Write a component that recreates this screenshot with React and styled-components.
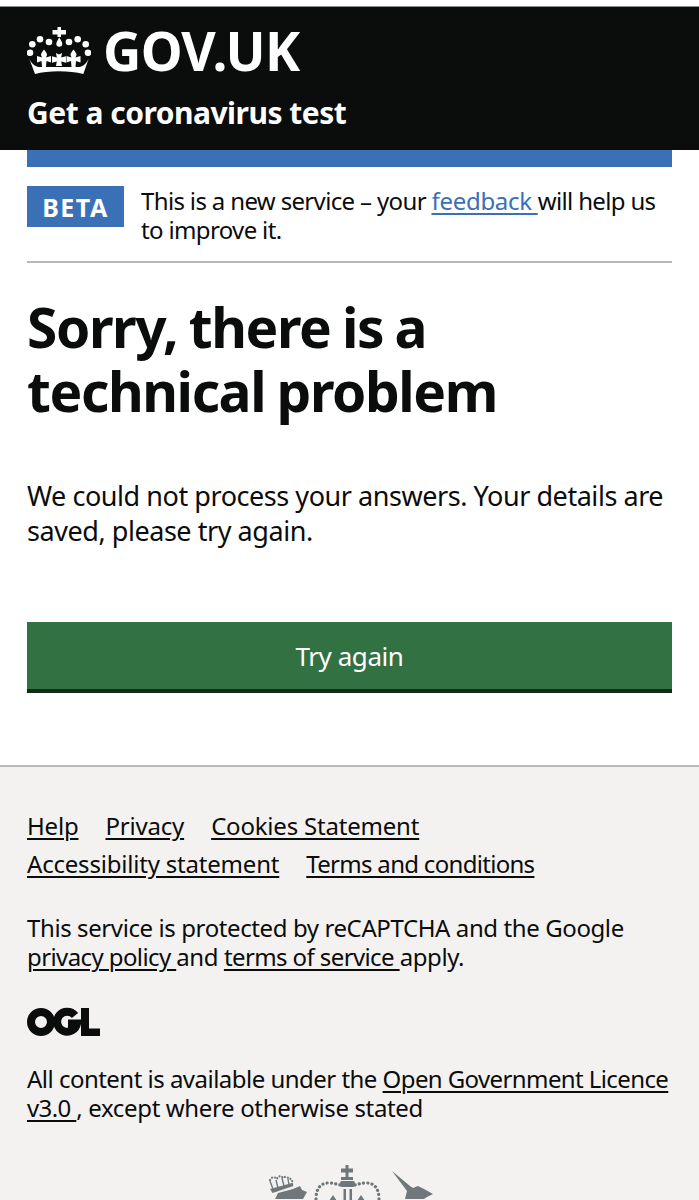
import React from "react"
import styled, { createGlobalStyle } from "styled-components"

const GlobalStyle = createGlobalStyle`
  html, body {
    margin: 0;
    padding: 0;
    background: #fff;
  }
  body {
    font-family: "Noto Sans", Arial, sans-serif;
    color: #0b0c0c;
  }
`

const Page = styled.div`
  height: 100vh;
  overflow: hidden;
  padding-top: 6px;
  box-sizing: border-box;
`

const Header = styled.header`
  background: #0b0c0c;
  border-top: 1px solid #8a8a8a;
  height: 144px;
  box-sizing: border-box;
  padding: 15px 27px 0;
  color: #fff;
`

const LogoRow = styled.div`
  display: flex;
  align-items: center;
  gap: 12px;
  height: 58px;
`

const LogoText = styled.span`
  font-size: 53px;
  font-weight: 700;
  line-height: 58px;
  letter-spacing: -0.7px;
`

const ServiceName = styled.div`
  margin-top: 15px;
  font-size: 30px;
  font-weight: 700;
  line-height: 36px;
  letter-spacing: -0.5px;
`

const Main = styled.main`
  margin: 0 27px;
`

const BlueBar = styled.div`
  height: 17px;
  background: #3a70b5;
`

const PhaseBanner = styled.div`
  display: flex;
  align-items: flex-start;
  gap: 17px;
  padding: 19px 0 17px;
  border-bottom: 2px solid #b8b8b8;
`

const PhaseTag = styled.strong`
  flex: none;
  width: 97px;
  height: 41px;
  background: #3a70b5;
  color: #fff;
  font-size: 25px;
  font-weight: 700;
  line-height: 43px;
  text-align: center;
  letter-spacing: 1.5px;
`

const PhaseText = styled.p`
  margin: 0;
  font-size: 24px;
  line-height: 29px;
  letter-spacing: -0.65px;
`

const BlueLink = styled.a`
  color: #3a70b5;
  letter-spacing: -0.3px;
  text-decoration: underline;
  text-decoration-thickness: 1.5px;
  text-underline-offset: 3px;
`

const Title = styled.h1`
  margin: 32px 0 0;
  font-size: 55px;
  font-weight: 700;
  line-height: 64px;
  letter-spacing: -1.4px;
  word-spacing: -1.5px;
`

const Lead = styled.p`
  margin: 55px 0 0;
  font-size: 27px;
  line-height: 35px;
  letter-spacing: -0.45px;
`

const Button = styled.button`
  display: block;
  width: 100%;
  height: 71px;
  margin: 74px 0 0;
  padding: 0;
  border: 0;
  border-bottom: 4px solid #0f2d17;
  background: #327141;
  color: #fff;
  font-family: inherit;
  font-size: 26px;
  letter-spacing: -0.45px;
`

const Footer = styled.footer`
  margin-top: 72px;
  min-height: 500px;
  background: #f3f2f1;
  border-top: 2px solid #b8b8b8;
  padding: 44px 27px 0;
`

const FooterLinks = styled.ul`
  list-style: none;
  margin: 0;
  padding: 0;
  display: flex;
  flex-wrap: wrap;
  column-gap: 27px;
  row-gap: 9px;
`

const FooterLink = styled.a`
  color: #0b0c0c;
  font-size: 24px;
  line-height: 29px;
  letter-spacing: ${(p) => (p.$tight ? -0.7 : -0.2)}px;
  text-decoration: underline;
  text-decoration-thickness: 1.5px;
  text-underline-offset: 3px;
`

const FooterText = styled.p`
  margin: ${(p) => p.$top}px 0 0;
  font-size: 24px;
  line-height: 29px;
  letter-spacing: ${(p) => p.$spacing}px;
`

const InlineLink = styled.a`
  color: #0b0c0c;
  letter-spacing: -0.6px;
  text-decoration: underline;
  text-decoration-thickness: 1.5px;
  text-underline-offset: 3px;
`

const Trailing = styled.span`
  letter-spacing: -0.35px;
`

const OglLogo = styled.svg`
  display: block;
  margin-top: 36px;
`

const CrestWrap = styled.div`
  display: flex;
  justify-content: center;
  margin-top: 37px;
`

const Crown = () => (
  <svg width="64" height="48" viewBox="0 0 64 48" fill="#fff">
    <path d="M30.500 0h3.500v3h5v4.500h-5V10h-3.500V7.500h-5V3h5z" />
    <path d="M32.300 10.500c1.500 2.500 3 4.500 3 6.300a3 3 0 0 1-6 0c0-1.800 1.500-3.800 3-6.300z" />
    <circle cx="5.300" cy="17.300" r="3.300" />
    <circle cx="13" cy="12.300" r="3.300" />
    <circle cx="22" cy="15" r="3.300" />
    <circle cx="42" cy="15" r="3.300" />
    <circle cx="50.700" cy="12.300" r="3.300" />
    <circle cx="58.700" cy="17.300" r="3.300" />
    <circle cx="3" cy="25.700" r="3.300" />
    <circle cx="61" cy="25.700" r="3.300" />
    <path d="M29 26l3 1.500 3-1.500-.8 4.500 4.800-1.200v6.400l-4.800-1.200.8 4.500h-6l.8-4.500-4.800 1.200v-6.400l4.800 1.200z" />
    <path d="M17 22.500c2 2.500 3 4 3 5.500l-1 2.500 5-1.500v6.500l-4.500-1.500-.5 6h-4l-.5-6-4.500 1.500V29l5 1.500-1-2.500c0-1.500 1-3 3-5.500z" />
    <path d="M46.500 22.500c2 2.500 3 4 3 5.500l-1 2.500 5-1.500v6.500l-4.500-1.500-.5 6h-4l-.5-6-4.500 1.500V29l5 1.500-1-2.500c0-1.500 1-3 3-5.500z" />
    <path d="M2.300 31.700c2 4 5 7.800 9.700 8.300h40c4.700-.5 7.700-4.300 9.700-8.300L56.300 47c-7-1.700-15-2.700-24.300-2.700S14.700 45.300 8 47z" />
  </svg>
)

const Ogl = () => (
  <OglLogo width="74" height="30" viewBox="0 0 74 30">
    <circle cx="14" cy="15" r="10" fill="none" stroke="#0b0c0c" strokeWidth="8" />
    <path
      d="M48 8.500A10 10 0 1 0 50 16.500H41"
      fill="none"
      stroke="#0b0c0c"
      strokeWidth="8"
    />
    <path d="M54 1h8v20.500h11V29H54z" fill="#0b0c0c" />
  </OglLogo>
)

const Crest = () => (
  <svg width="180" height="60" viewBox="0 0 180 60" fill="#6f777b">
    <path
      d="M10 21c2-4 5-3 7-1 1-3 4-4 6-1 2-2 5-1 6 1 2-1 4 1 3 6"
      fill="none"
      stroke="#6f777b"
      strokeWidth="2.200"
      strokeLinecap="round"
      strokeDasharray="0.100 3"
    />
    <path d="M10 22l3 8M16 21l2 8M22 19l2 8M28 20l1 6" stroke="#6f777b" strokeWidth="1.400" fill="none" />
    <path d="M10 30l22-6 1.500 3-21 7z" />
    <path d="M15 40l3-6 15-4 7-3 2 4 5 2-4 7z" />
    <path d="M85.500 6h3v3.500h4.500v4h-4.500V18h4.500v3H81v-3h4.500v-4.500H81v-4h4.500z" />
    <rect x="80" y="22" width="15" height="6" rx="2" />
    <path
      d="M56 40C56 28 62 24 68 24c5 0 9 1 12 2M119 40c0-12-6-16-12-16-5 0-9 1-12 2"
      fill="none"
      stroke="#6f777b"
      strokeWidth="3.200"
      strokeLinecap="round"
      strokeDasharray="0.100 4.200"
    />
    <rect x="83.500" y="30" width="2.500" height="12" />
    <rect x="89.500" y="30" width="2.500" height="12" />
    <path d="M73 36l4 6h-8zM101 36l4 6h-8z" />
    <path d="M132 12l18 15 3 2 5-2 6 3 9 5-6 3-3 2h-19l2-8z" />
  </svg>
)

const App = () => (
  <>
    <GlobalStyle />
    <Page>
      <Header>
        <LogoRow>
          <Crown />
          <LogoText>GOV.UK</LogoText>
        </LogoRow>
        <ServiceName>Get a coronavirus test</ServiceName>
      </Header>
      <Main>
        <BlueBar />
        <PhaseBanner>
          <PhaseTag>BETA</PhaseTag>
          <PhaseText>
            This is a new service – your <BlueLink href="#">feedback </BlueLink>will help us to improve it.
          </PhaseText>
        </PhaseBanner>
        <Title>
          Sorry, there is a
          <br />
          technical problem
        </Title>
        <Lead>We could not process your answers. Your details are saved, please try again.</Lead>
        <Button>Try again</Button>
      </Main>
      <Footer>
        <FooterLinks>
          <li><FooterLink href="#">Help</FooterLink></li>
          <li><FooterLink href="#">Privacy</FooterLink></li>
          <li><FooterLink href="#">Cookies Statement</FooterLink></li>
          <li><FooterLink href="#">Accessibility statement</FooterLink></li>
          <li><FooterLink href="#" $tight>Terms and conditions</FooterLink></li>
        </FooterLinks>
        <FooterText $top={35} $spacing={-0.4}>
          This service is protected by reCAPTCHA and the Google{" "}
          <InlineLink href="#">privacy policy </InlineLink>and{" "}
          <InlineLink href="#">terms of service </InlineLink>apply.
        </FooterText>
        <Ogl />
        <FooterText $top={27} $spacing={-0.52}>
          All content is available under the <InlineLink href="#">Open Government Licence v3.0 </InlineLink>
          <Trailing>, except where otherwise stated</Trailing>
        </FooterText>
        <CrestWrap>
          <Crest />
        </CrestWrap>
      </Footer>
    </Page>
  </>
)

export default App
